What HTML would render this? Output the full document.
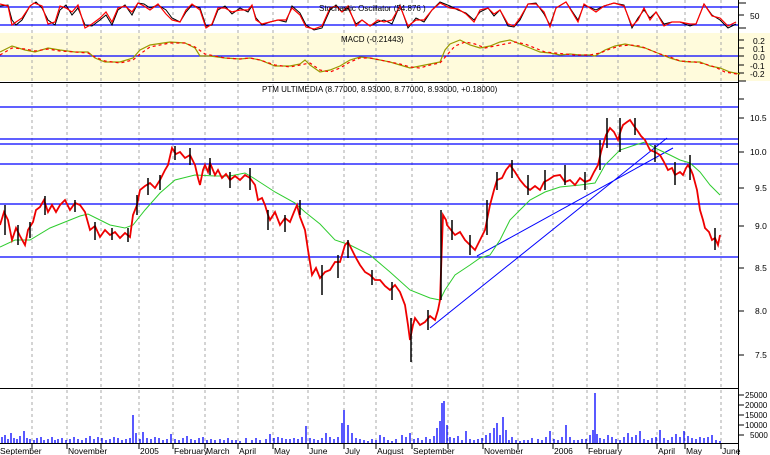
<!DOCTYPE html>
<html><head><meta charset="utf-8"><style>
body{margin:0;background:#fff;width:770px;height:455px;overflow:hidden}
svg{display:block}
text{font-family:"Liberation Sans",sans-serif;font-size:8.5px;fill:#000}
</style></head><body>
<svg width="770" height="455" viewBox="0 0 770 455">
<rect x="0" y="33" width="770" height="48" fill="#fffbdc"/>
<g stroke="#aaa" stroke-dasharray="3,3" stroke-width="1">
<path d="M32 0V443M67 0V443M101 0V443M139 0V443M173 0V443M205 0V443M238 0V443M273 0V443M308 0V443M344 0V443M376 0V443M412 0V443M448 0V443M483 0V443M518 0V443M553 0V443M587 0V443M618 0V443M657 0V443M685 0V443M721 0V443"/>
</g>
<g stroke="#000" stroke-width="1">
<path d="M0 82.5H738M0 388.5H738M0 443.5H738M738.5 0V455"/>
<path d="M738 3h8M738 15h6M738 28h8M738 40h6M738 48h6M738 56h6M738 65h6M738 73h6M738 81h8M738 99h6M738 118h6M738 152h6M738 188h6M738 226h6M738 268h6M738 311h6M738 355h6M738 395h6M738 405h6M738 415h6M738 425h6M738 435h6"/>
</g>
<g stroke="#00f" stroke-width="1.3">
<path d="M0 7H738M0 25H738M0 56H738M0 107H738M0 139H738M0 144H738M0 164H738M0 204H738M0 257H738"/>
<path d="M430 328L667 138M477 256L673 148" stroke-width="1"/>
</g>
<polyline fill="none" stroke="#000" stroke-width="1" points="0,6 8,5 12,20 16,25 22,20 30,6 36,2 42,8 48,20 55,25 60,10 66,5 72,15 78,8 85,25 92,26 100,20 106,15 112,25 118,10 125,5 132,15 138,3 144,4 150,8 158,5 166,10 172,18 180,22 186,12 192,5 200,8 206,26 212,25 218,10 225,6 232,14 240,8 248,12 252,6 256,18 262,25 270,22 278,20 286,22 292,6 300,13 306,25 314,30 322,28 330,10 336,5 342,12 348,8 356,24 362,20 370,26 378,22 384,20 392,24 400,5 408,28 416,18 424,22 432,10 440,2 450,6 458,10 466,13 474,20 480,12 488,8 494,16 500,10 508,26 514,27 520,20 528,4 536,3 544,14 550,25 556,8 566,2 578,20 584,5 596,10 604,6 614,3 624,5 632,28 638,18 644,10 650,18 656,12 664,24 672,22 680,22 690,26 696,24 704,4 712,15 720,20 728,28 736,24"/>
<polyline fill="none" stroke="#f00" stroke-width="1.2" points="0,4 8,6 12,25 16,22 22,18 30,6 34,3 42,6 48,24 55,22 60,6 66,8 72,12 78,5 85,28 92,24 100,18 106,12 112,22 118,8 125,6 132,12 138,3 144,6 150,10 158,4 166,14 172,20 180,22 186,10 192,4 200,10 206,28 212,24 218,8 225,8 232,12 240,10 248,10 252,5 256,20 262,24 270,22 278,20 286,20 292,8 300,15 306,27 314,29 322,26 330,8 336,6 342,12 348,6 356,26 362,20 370,26 378,20 384,22 392,20 400,6 408,26 416,20 424,20 432,10 440,3 450,8 458,9 466,14 474,22 480,10 488,8 494,14 500,10 508,24 514,26 520,18 528,4 536,4 544,12 550,27 556,8 566,2 578,22 584,4 596,12 604,6 614,3 624,6 632,26 638,20 644,8 650,20 656,12 664,26 672,22 680,22 690,24 696,24 704,4 712,16 720,18 728,26 736,22"/>
<polyline fill="none" stroke="#999900" stroke-width="1.2" points="0,52 12,46 25,50 35,52 48,48 60,50 75,52 88,52 95,58 105,62 120,62 133,58 140,50 150,45 170,42 185,43 195,48 200,56 210,56 225,58 240,59 250,58 260,60 275,66 290,66 300,64 305,60 310,65 320,72 330,70 340,66 350,60 360,57 370,58 380,60 390,62 400,65 410,68 420,66 430,64 440,62 445,50 450,44 460,40 470,45 480,48 490,46 500,42 510,40 520,44 530,48 540,52 550,53 560,55 570,54 580,55 590,55 595,56 605,50 615,46 625,44 635,46 645,48 655,52 665,56 670,58 680,61 690,62 700,62 710,66 720,68 730,72 740,74"/>
<polyline fill="none" stroke="#f00" stroke-width="1.2" stroke-dasharray="3,3" points="0,55 12,48 25,49 35,51 48,49 60,51 75,52 88,53 95,57 105,61 120,63 133,60 140,54 150,47 170,43 185,43 195,47 205,54 215,56 225,58 240,59 250,58 260,60 275,65 290,67 300,65 310,63 320,70 330,72 340,68 350,62 360,58 370,58 380,60 390,62 400,64 410,67 420,68 430,65 440,63 447,55 455,46 465,42 475,44 485,48 495,46 505,44 515,42 525,44 535,48 545,52 555,53 565,54 575,55 590,55 600,53 610,49 620,46 630,45 640,46 650,50 660,54 670,57 680,61 695,62 705,64 715,67 725,72 737,74"/>
<polyline fill="none" stroke="#2ecc2e" stroke-width="1" points="0,247 15,240 30,240 50,228 65,222 80,216 88,214 100,220 110,225 125,228 133,225 145,210 160,193 175,180 195,175 215,176 230,176 245,173 255,179 275,192 295,203 305,212 320,224 335,240 350,245 370,255 390,272 410,290 430,298 440,300 445,290 455,275 470,265 480,258 490,255 500,240 510,220 520,210 530,200 545,192 560,187 580,185 595,183 605,165 620,150 635,145 645,142 655,148 670,155 680,160 690,163 700,172 710,185 720,195"/>
<polyline fill="none" stroke="#e00" stroke-width="1.8" points="0,225 4,212 8,220 12,240 16,228 20,236 25,245 28,230 33,222 36,210 40,207 44,200 48,212 52,205 56,212 60,205 65,200 70,210 75,203 80,205 85,212 90,230 95,226 100,237 105,230 110,235 115,232 120,238 125,233 130,237 133,215 137,205 140,190 145,186 150,183 155,188 160,180 165,170 168,165 172,148 176,154 180,152 185,158 190,155 195,165 198,178 200,185 203,170 205,165 208,172 210,163 215,175 218,170 222,178 226,174 230,180 235,176 240,180 245,175 250,178 255,185 258,200 262,198 265,205 268,215 270,220 275,212 280,225 285,218 290,222 294,212 297,205 300,217 305,230 308,250 312,275 316,268 320,278 325,272 330,270 335,262 340,262 345,245 348,242 352,250 356,258 360,265 365,272 370,275 375,280 380,280 385,286 390,290 395,285 400,292 405,305 408,325 410,340 413,325 415,318 420,325 425,322 430,316 435,320 438,310 440,300 443,215 446,220 447,225 451,230 455,235 460,232 465,240 470,245 475,250 480,240 485,230 488,215 490,205 494,190 497,180 502,178 506,170 510,165 515,172 520,180 525,186 530,190 535,186 540,190 544,182 548,180 554,176 560,175 565,182 570,180 575,185 580,178 585,182 590,180 594,172 598,165 601,152 603,145 606,135 610,128 614,132 618,140 621,130 623,125 627,122 630,120 634,126 637,130 641,136 645,140 648,146 650,150 655,152 660,155 664,162 668,170 672,168 675,175 680,172 683,175 686,168 688,165 691,170 693,175 697,190 700,210 703,220 705,228 709,232 712,240 715,238 718,245 720,235"/>
<g stroke="#000" stroke-width="1.5">
<path d="M5 205V235M18 225V245M30 222V238M45 196V215M75 200V212M95 222V240M112 228V240M128 228V242M137 195V215M148 178V195M160 175V190M175 146V160M190 148V165M210 158V175M230 172V188M250 168V190M268 210V230M285 215V232M300 200V215M322 265V295M338 255V278M348 240V258M372 270V285M392 282V300M411 318V362M428 310V330M441 210V300M452 220V240M470 235V255M487 200V235M497 172V190M512 160V178M528 175V195M545 170V190M565 165V185M585 172V190M600 140V170M607 118V148M620 118V152M635 118V135M655 145V162M675 162V185M690 155V180M715 228V250"/>
</g>
<g stroke="#00f" stroke-width="1.3">
<path d="M2 443v-6M5 443v-8M8 443v-4M11 443v-10M14 443v-5M17 443v-4M20 443v-7M24 443v-12M27 443v-5M30 443v-4M34 443v-3M37 443v-5M41 443v-6M44 443v-3M48 443v-4M52 443v-6M55 443v-3M58 443v-4M62 443v-5M66 443v-3M70 443v-4M74 443v-6M78 443v-4M82 443v-3M86 443v-5M90 443v-7M94 443v-4M98 443v-6M102 443v-5M106 443v-3M110 443v-4M114 443v-6M118 443v-5M122 443v-3M126 443v-4M130 443v-5M133 443v-28M136 443v-10M140 443v-4M143 443v-11M147 443v-5M151 443v-4M155 443v-6M159 443v-5M163 443v-3M167 443v-4M171 443v-9M175 443v-4M179 443v-3M183 443v-5M187 443v-7M191 443v-4M195 443v-3M199 443v-5M203 443v-6M207 443v-3M211 443v-4M215 443v-3M220 443v-4M224 443v-3M228 443v-5M232 443v-3M236 443v-3M240 443v-2M246 443v-5M252 443v-3M256 443v-5M260 443v-3M266 443v-4M270 443v-9M274 443v-5M278 443v-6M282 443v-5M286 443v-4M290 443v-4M294 443v-5M298 443v-4M302 443v-6M306 443v-17M310 443v-5M314 443v-4M318 443v-3M322 443v-5M326 443v-10M330 443v-6M334 443v-4M338 443v-6M342 443v-20M344 443v-33M348 443v-18M352 443v-10M356 443v-5M360 443v-4M364 443v-3M368 443v-2M372 443v-4M376 443v-3M380 443v-8M384 443v-6M388 443v-3M392 443v-2M396 443v-4M402 443v-8M406 443v-6M410 443v-10M414 443v-4M418 443v-5M422 443v-3M426 443v-6M430 443v-4M434 443v-7M437 443v-15M440 443v-22M442 443v-40M444 443v-42M447 443v-18M450 443v-6M454 443v-5M458 443v-7M462 443v-3M466 443v-12M470 443v-4M474 443v-3M478 443v-4M482 443v-5M486 443v-8M490 443v-10M494 443v-15M497 443v-20M500 443v-8M503 443v-26M506 443v-13M509 443v-3M512 443v-6M516 443v-3M520 443v-2M524 443v-3M528 443v-3M532 443v-5M538 443v-4M542 443v-3M546 443v-6M550 443v-12M554 443v-4M558 443v-3M562 443v-6M566 443v-18M570 443v-6M574 443v-3M578 443v-3M582 443v-4M586 443v-4M590 443v-8M593 443v-13M595 443v-50M597 443v-9M600 443v-5M604 443v-4M608 443v-8M612 443v-6M616 443v-4M620 443v-3M624 443v-6M628 443v-10M632 443v-6M636 443v-8M640 443v-12M644 443v-4M648 443v-3M652 443v-5M656 443v-6M660 443v-13M664 443v-5M668 443v-3M672 443v-6M676 443v-9M680 443v-6M684 443v-12M688 443v-7M692 443v-5M696 443v-4M700 443v-6M704 443v-5M708 443v-6M712 443v-8M716 443v-3M720 443v-2"/>
</g>
<g stroke="#000" stroke-width="1"><path d="M32 443v6M67 443v6M101 443v6M139 443v6M173 443v6M205 443v6M238 443v6M273 443v6M308 443v6M344 443v6M376 443v6M412 443v6M448 443v6M483 443v6M518 443v6M553 443v6M587 443v6M618 443v6M657 443v6M685 443v6M721 443v6"/></g>
<text x="319" y="11" style="font-size:8px">Stochastic Oscillator (54.876 )</text>
<text x="341" y="42" style="font-size:8px">MACD (-0.21443)</text>
<text x="262" y="92" style="font-size:8px">PTM ULTIMEDIA (8.77000, 8.93000, 8.77000, 8.93000, +0.18000)</text>
<g>
<text x="750" y="19">50</text>
<text x="753" y="44">0.2</text><text x="753" y="52">0.1</text><text x="753" y="60">0.0</text><text x="750" y="69">-0.1</text><text x="750" y="77">-0.2</text>
<text x="750" y="121">10.5</text><text x="750" y="155">10.0</text><text x="755" y="191">9.5</text><text x="755" y="229">9.0</text><text x="755" y="271">8.5</text><text x="755" y="314">8.0</text><text x="755" y="358">7.5</text>
<text x="745" y="398" style="font-size:8px">25000</text><text x="745" y="408" style="font-size:8px">20000</text><text x="745" y="418" style="font-size:8px">15000</text><text x="745" y="428" style="font-size:8px">10000</text><text x="750" y="438" style="font-size:8px">5000</text>
</g>
<g style="font-size:8px">
<text x="0" y="454">September</text><text x="68" y="454">November</text><text x="140" y="454">2005</text><text x="174" y="454">February</text><text x="206" y="454">March</text><text x="239" y="454">April</text><text x="274" y="454">May</text><text x="309" y="454">June</text><text x="345" y="454">July</text><text x="377" y="454">August</text><text x="413" y="454">September</text><text x="484" y="454">November</text><text x="554" y="454">2006</text><text x="588" y="454">February</text><text x="658" y="454">April</text><text x="686" y="454">May</text><text x="722" y="454">June</text>
</g>
</svg>
</body></html>
